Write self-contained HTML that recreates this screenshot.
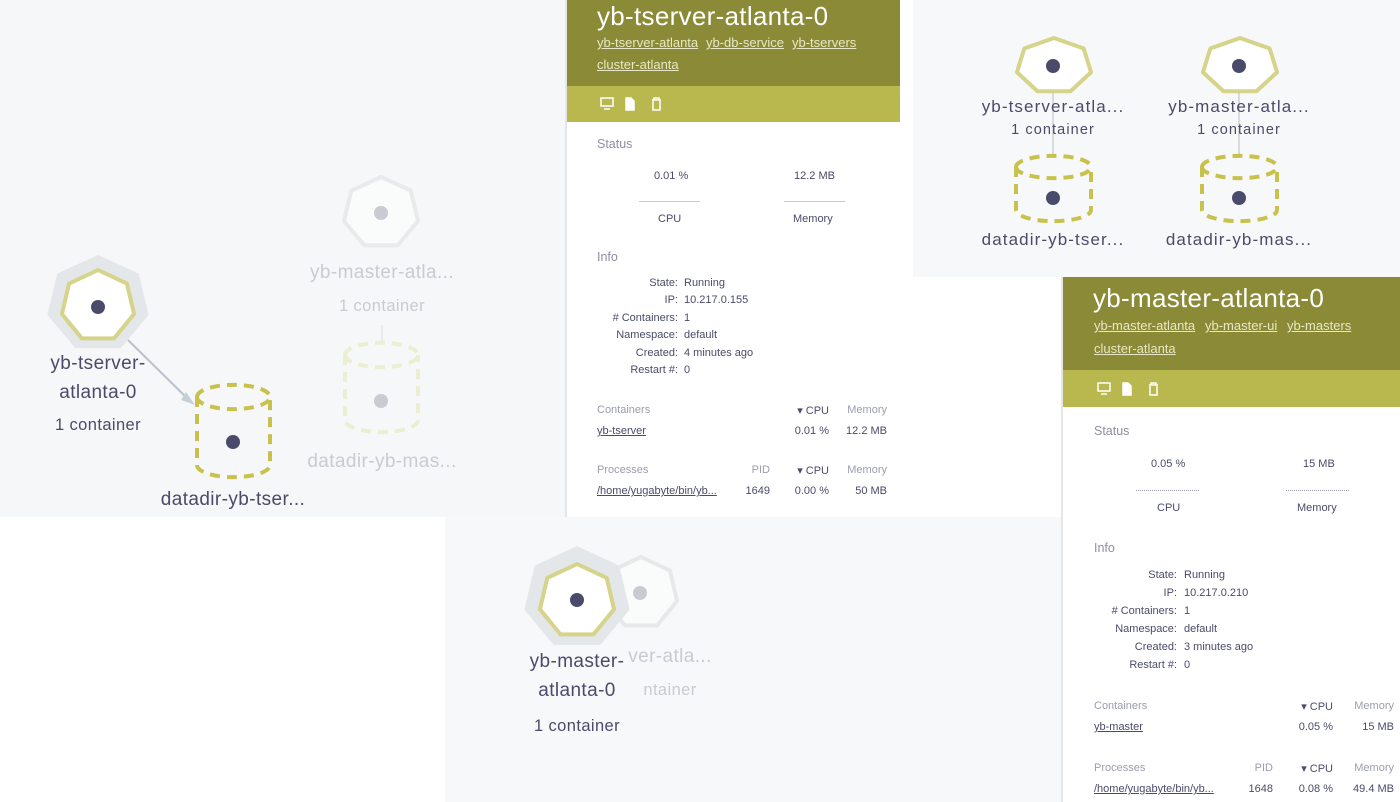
<!DOCTYPE html>
<html><head><meta charset="utf-8"><style>
*{margin:0;padding:0;box-sizing:border-box}
body{width:1400px;height:802px;position:relative;overflow:hidden;background:#fff;font-family:"Liberation Sans",sans-serif;color:#4a4b6a}
.a{position:absolute;white-space:nowrap}
.bg{position:absolute}
.nl{font-size:19px;letter-spacing:0.4px;text-align:center;transform:translateX(-50%);color:#4a4b6a}
.tr{font-size:17px;letter-spacing:1.1px}
.fd{color:#c9cbd3}
.panel{position:absolute;background:#fff;border-left:2px solid #e6e6e6}
.hdr{position:absolute;left:0;right:0;top:0;background:#8b8a37}
.tb{position:absolute;left:0;right:0;background:#b9b84e}
.ttl{color:#fff;font-size:26px;letter-spacing:0.3px}
.lnk{color:#e9e8c6;font-size:13px;text-decoration:underline}
.sec{color:#8d8fa3;font-size:12.5px}
.sm{font-size:11px;color:#4a4b6a}
.lbl{font-size:11px;color:#4a4b6a;text-align:right}
.gh{font-size:11px;color:#9b9dae}
.ul{text-decoration:underline}
</style></head><body>
<div class="bg" style="left:0;top:0;width:566px;height:517px;background:#f6f7f8"></div>
<div class="bg" style="left:445px;top:517px;width:617px;height:285px;background:#f7f8f9"></div>
<div class="bg" style="left:913px;top:0;width:487px;height:277px;background:#f7f8f9"></div>

<svg class="a" style="left:0;top:0" width="1400" height="802">
<defs>
<polygon id="h" points="0,-1 0.7818,-0.6235 0.9749,0.2225 0.4339,0.9010 -0.4339,0.9010 -0.9749,0.2225 -0.7818,-0.6235" vector-effect="non-scaling-stroke"/>
</defs>
<g stroke-linejoin="round">
<use href="#h" transform="translate(98,304) scale(52,49)" fill="#e3e7e9"/>
<use href="#h" transform="translate(98,306) scale(37,36)" fill="#fff" stroke="#d6d38a" stroke-width="4"/>
<circle cx="98" cy="307" r="7" fill="#4a4b6a"/>
<line x1="128" y1="340" x2="192" y2="403" stroke="#b8c2cc" stroke-width="2"/>
<path d="M186,392 L195,405 L181,400 Z" fill="#c6ced6"/>
<path d="M197,397 A36,12 0 0 1 270,397 M197,397 L197,465 A36,12 0 0 0 270,465 L270,397 M197,397 A36,12 0 0 0 270,397" fill="none" stroke="#c8c24c" stroke-width="4" stroke-dasharray="10 7"/>
<circle cx="233" cy="442" r="7" fill="#4a4b6a"/>
<use href="#h" transform="translate(381,213) scale(38,36)" fill="#fafbfb" stroke="#e7ebec" stroke-width="4"/>
<circle cx="381" cy="213" r="7" fill="#c9cbd3"/>
<line x1="382" y1="325" x2="382" y2="343" stroke="#ddd" stroke-width="1"/>
<path d="M345,355 A36,12 0 0 1 418,355 M345,355 L345,420 A36,12 0 0 0 418,420 L418,355 M345,355 A36,12 0 0 0 418,355" fill="none" stroke="#eceed2" stroke-width="4" stroke-dasharray="10 7"/>
<circle cx="381" cy="401" r="7" fill="#c9cbd3"/>
<use href="#h" transform="translate(641,593) scale(37,36)" fill="#fafbfb" stroke="#e5e9ea" stroke-width="4"/>
<circle cx="640" cy="593" r="7" fill="#c9cbd3"/>
<use href="#h" transform="translate(577,598) scale(54,52)" fill="#e3e7e9"/>
<use href="#h" transform="translate(577,601) scale(38,37)" fill="#fff" stroke="#d6d38a" stroke-width="4"/>
<circle cx="577" cy="600" r="7" fill="#4a4b6a"/>
<use href="#h" transform="translate(1054,66) scale(38,28)" fill="#fff" stroke="#d6d38a" stroke-width="4"/>
<circle cx="1053" cy="66" r="7" fill="#4a4b6a"/>
<use href="#h" transform="translate(1240,66) scale(38,28)" fill="#fff" stroke="#d6d38a" stroke-width="4"/>
<circle cx="1239" cy="66" r="7" fill="#4a4b6a"/>
<line x1="1053" y1="92" x2="1053" y2="155" stroke="#bbb" stroke-width="1"/>
<line x1="1239" y1="92" x2="1239" y2="155" stroke="#bbb" stroke-width="1"/>
<path d="M1016,167 A37,11 0 0 1 1091,167 M1016,167 L1016,210 A37,11 0 0 0 1091,210 L1091,167 M1016,167 A37,11 0 0 0 1091,167" fill="none" stroke="#c8c24c" stroke-width="4" stroke-dasharray="10 7"/>
<circle cx="1053" cy="198" r="7" fill="#4a4b6a"/>
<path d="M1202,167 A37,11 0 0 1 1277,167 M1202,167 L1202,210 A37,11 0 0 0 1277,210 L1277,167 M1202,167 A37,11 0 0 0 1277,167" fill="none" stroke="#c8c24c" stroke-width="4" stroke-dasharray="10 7"/>
<circle cx="1239" cy="198" r="7" fill="#4a4b6a"/>
</g>
</svg>

<div class="a nl" style="left:98px;top:353px">yb-tserver-</div>
<div class="a nl" style="left:98px;top:382px">atlanta-0</div>
<div class="a nl" style="left:98px;top:416px;font-size:16.5px">1 container</div>
<div class="a nl" style="left:233px;top:489px">datadir-yb-tser...</div>
<div class="a nl fd" style="left:382px;top:262px">yb-master-atla...</div>
<div class="a nl fd" style="left:382px;top:297px;font-size:16.5px">1 container</div>
<div class="a nl fd" style="left:382px;top:451px">datadir-yb-mas...</div>

<div class="a nl fd" style="left:670px;top:646px">ver-atla...</div>
<div class="a nl fd" style="left:670px;top:681px;font-size:16.5px">ntainer</div>
<div class="a nl" style="left:577px;top:651px">yb-master-</div>
<div class="a nl" style="left:577px;top:680px">atlanta-0</div>
<div class="a nl" style="left:577px;top:717px;font-size:16.5px">1 container</div>

<div class="a nl tr" style="left:1053px;top:97px">yb-tserver-atla...</div>
<div class="a nl tr" style="left:1053px;top:122px;font-size:14.5px">1 container</div>
<div class="a nl tr" style="left:1053px;top:230px">datadir-yb-tser...</div>
<div class="a nl tr" style="left:1239px;top:97px">yb-master-atla...</div>
<div class="a nl tr" style="left:1239px;top:122px;font-size:14.5px">1 container</div>
<div class="a nl tr" style="left:1239px;top:230px">datadir-yb-mas...</div>

<div class="panel" style="left:565px;top:0;width:335px;height:517px">
 <div class="hdr" style="height:86px"></div>
 <div class="tb" style="top:86px;height:36px"></div>
</div>
<div class="a ttl" style="left:597px;top:1px">yb-tserver-atlanta-0</div>
<div class="a lnk" style="left:597px;top:35px">yb-tserver-atlanta</div>
<div class="a lnk" style="left:706px;top:35px">yb-db-service</div>
<div class="a lnk" style="left:792px;top:35px">yb-tservers</div>
<div class="a lnk" style="left:597px;top:57px">cluster-atlanta</div>
<svg class="a" style="left:600px;top:97px" width="64" height="14"><g fill="none" stroke="#fff" stroke-width="1.5"><rect x="1" y="1" width="12" height="8"/><line x1="4" y1="12" x2="10" y2="12"/><path d="M26,1 h5 l3,3 v9 h-8 z" fill="#fff"/><path d="M52,3 h9 M54,3 v-2 h5 v2 M53,4 v9 h7 v-9"/></g></svg>
<div class="a sec" style="left:597px;top:137px">Status</div>
<div class="a sm" style="left:654px;top:170px">0.01 %</div>
<div class="a sm" style="left:794px;top:170px">12.2 MB</div>
<div class="a" style="left:639px;top:201px;width:61px;border-top:1px solid #c8cad4"></div>
<div class="a" style="left:784px;top:201px;width:61px;border-top:1px solid #c8cad4"></div>
<div class="a sm" style="left:658px;top:213px">CPU</div>
<div class="a sm" style="left:793px;top:213px">Memory</div>
<div class="a sec" style="left:597px;top:250px">Info</div>
<div class="a lbl" style="right:722px;top:277px">State:</div><div class="a sm" style="left:684px;top:277px">Running</div>
<div class="a lbl" style="right:722px;top:294px">IP:</div><div class="a sm" style="left:684px;top:294px">10.217.0.155</div>
<div class="a lbl" style="right:722px;top:312px"># Containers:</div><div class="a sm" style="left:684px;top:312px">1</div>
<div class="a lbl" style="right:722px;top:329px">Namespace:</div><div class="a sm" style="left:684px;top:329px">default</div>
<div class="a lbl" style="right:722px;top:347px">Created:</div><div class="a sm" style="left:684px;top:347px">4 minutes ago</div>
<div class="a lbl" style="right:722px;top:364px">Restart #:</div><div class="a sm" style="left:684px;top:364px">0</div>
<div class="a gh" style="left:597px;top:404px">Containers</div>
<div class="a gh" style="right:571px;top:404px;color:#4a4b6a">▾ CPU</div>
<div class="a gh" style="right:513px;top:404px">Memory</div>
<div class="a sm ul" style="left:597px;top:425px">yb-tserver</div>
<div class="a sm" style="right:571px;top:425px">0.01 %</div>
<div class="a sm" style="right:513px;top:425px">12.2 MB</div>
<div class="a gh" style="left:597px;top:464px">Processes</div>
<div class="a gh" style="right:630px;top:464px">PID</div>
<div class="a gh" style="right:571px;top:464px;color:#4a4b6a">▾ CPU</div>
<div class="a gh" style="right:513px;top:464px">Memory</div>
<div class="a sm ul" style="left:597px;top:485px">/home/yugabyte/bin/yb...</div>
<div class="a sm" style="right:630px;top:485px">1649</div>
<div class="a sm" style="right:571px;top:485px">0.00 %</div>
<div class="a sm" style="right:513px;top:485px">50 MB</div>

<div class="panel" style="left:1061px;top:277px;width:339px;height:525px">
 <div class="hdr" style="height:93px"></div>
 <div class="tb" style="top:93px;height:37px"></div>
</div>
<div class="a ttl" style="left:1093px;top:283px">yb-master-atlanta-0</div>
<div class="a lnk" style="left:1094px;top:318px">yb-master-atlanta</div>
<div class="a lnk" style="left:1205px;top:318px">yb-master-ui</div>
<div class="a lnk" style="left:1287px;top:318px">yb-masters</div>
<div class="a lnk" style="left:1094px;top:341px">cluster-atlanta</div>
<svg class="a" style="left:1097px;top:382px" width="64" height="14"><g fill="none" stroke="#fff" stroke-width="1.5"><rect x="1" y="1" width="12" height="8"/><line x1="4" y1="12" x2="10" y2="12"/><path d="M26,1 h5 l3,3 v9 h-8 z" fill="#fff"/><path d="M52,3 h9 M54,3 v-2 h5 v2 M53,4 v9 h7 v-9"/></g></svg>
<div class="a sec" style="left:1094px;top:424px">Status</div>
<div class="a sm" style="left:1151px;top:458px">0.05 %</div>
<div class="a sm" style="left:1303px;top:458px">15 MB</div>
<div class="a" style="left:1136px;top:490px;width:63px;border-top:1px dotted #9a9cac"></div>
<div class="a" style="left:1286px;top:490px;width:63px;border-top:1px dotted #9a9cac"></div>
<div class="a sm" style="left:1157px;top:502px">CPU</div>
<div class="a sm" style="left:1297px;top:502px">Memory</div>
<div class="a sec" style="left:1094px;top:541px">Info</div>
<div class="a lbl" style="right:223px;top:569px">State:</div><div class="a sm" style="left:1184px;top:569px">Running</div>
<div class="a lbl" style="right:223px;top:587px">IP:</div><div class="a sm" style="left:1184px;top:587px">10.217.0.210</div>
<div class="a lbl" style="right:223px;top:605px"># Containers:</div><div class="a sm" style="left:1184px;top:605px">1</div>
<div class="a lbl" style="right:223px;top:623px">Namespace:</div><div class="a sm" style="left:1184px;top:623px">default</div>
<div class="a lbl" style="right:223px;top:641px">Created:</div><div class="a sm" style="left:1184px;top:641px">3 minutes ago</div>
<div class="a lbl" style="right:223px;top:659px">Restart #:</div><div class="a sm" style="left:1184px;top:659px">0</div>
<div class="a gh" style="left:1094px;top:700px">Containers</div>
<div class="a gh" style="right:67px;top:700px;color:#4a4b6a">▾ CPU</div>
<div class="a gh" style="right:6px;top:700px">Memory</div>
<div class="a sm ul" style="left:1094px;top:721px">yb-master</div>
<div class="a sm" style="right:67px;top:721px">0.05 %</div>
<div class="a sm" style="right:6px;top:721px">15 MB</div>
<div class="a gh" style="left:1094px;top:762px">Processes</div>
<div class="a gh" style="right:127px;top:762px">PID</div>
<div class="a gh" style="right:67px;top:762px;color:#4a4b6a">▾ CPU</div>
<div class="a gh" style="right:6px;top:762px">Memory</div>
<div class="a sm ul" style="left:1094px;top:783px">/home/yugabyte/bin/yb...</div>
<div class="a sm" style="right:127px;top:783px">1648</div>
<div class="a sm" style="right:67px;top:783px">0.08 %</div>
<div class="a sm" style="right:6px;top:783px">49.4 MB</div>
</body></html>
